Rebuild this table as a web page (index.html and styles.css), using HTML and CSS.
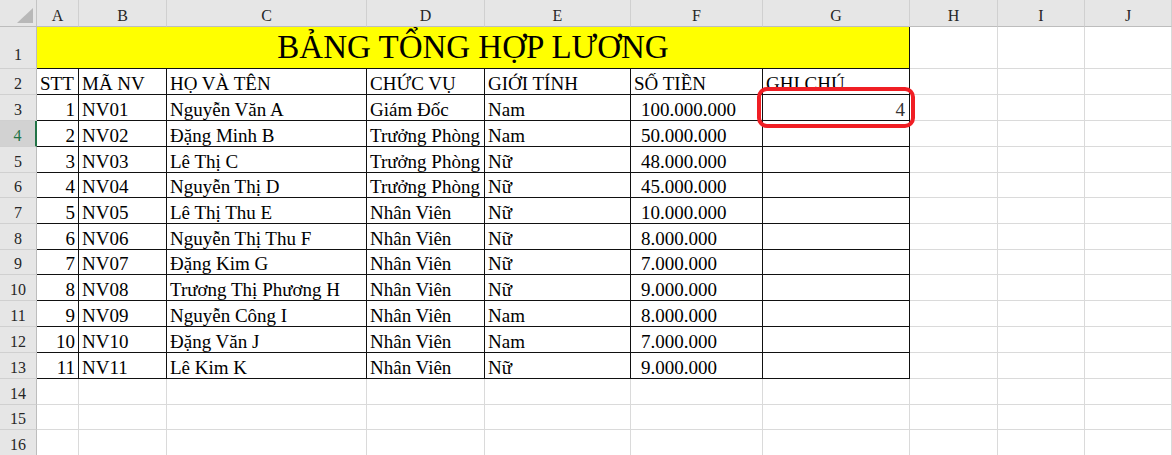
FILE: index.html
```html
<!DOCTYPE html>
<html lang="vi">
<head>
<meta charset="utf-8">
<title>Bảng tổng hợp lương</title>
<link rel="stylesheet" href="styles.css">
</head>
<body>
<div class="sheet">
  <div class="corner"><svg width="36" height="26" viewBox="0 0 36 26"><polygon points="33,8 33,23 17,23" fill="#b8b8b8"/></svg></div>
  <div class="ch">A</div><div class="ch">B</div><div class="ch">C</div><div class="ch">D</div><div class="ch">E</div><div class="ch">F</div><div class="ch">G</div><div class="ch">H</div><div class="ch">I</div><div class="ch">J</div>

  <div class="rh rh1">1</div>
  <div class="cell t title">BẢNG TỔNG HỢP LƯƠNG</div>
  <div class="cell"></div><div class="cell"></div><div class="cell"></div>

  <div class="rh">2</div>
  <div class="cell t">STT</div><div class="cell t">MÃ NV</div><div class="cell t">HỌ VÀ TÊN</div><div class="cell t">CHỨC VỤ</div><div class="cell t">GIỚI TÍNH</div><div class="cell t">SỐ TIỀN</div><div class="cell t">GHI CHÚ</div>
  <div class="cell"></div><div class="cell"></div><div class="cell"></div>

  <div class="rh">3</div>
  <div class="cell t r">1</div><div class="cell t">NV01</div><div class="cell t">Nguyễn Văn A</div><div class="cell t">Giám Đốc</div><div class="cell t">Nam</div><div class="cell t m">100.000.000</div><div class="cell t r note">4</div>
  <div class="cell"></div><div class="cell"></div><div class="cell"></div>

  <div class="rh sel">4</div>
  <div class="cell t r">2</div><div class="cell t">NV02</div><div class="cell t">Đặng Minh B</div><div class="cell t">Trưởng Phòng</div><div class="cell t">Nam</div><div class="cell t m">50.000.000</div><div class="cell t"></div>
  <div class="cell"></div><div class="cell"></div><div class="cell"></div>

  <div class="rh">5</div>
  <div class="cell t r">3</div><div class="cell t">NV03</div><div class="cell t">Lê Thị C</div><div class="cell t">Trưởng Phòng</div><div class="cell t">Nữ</div><div class="cell t m">48.000.000</div><div class="cell t"></div>
  <div class="cell"></div><div class="cell"></div><div class="cell"></div>

  <div class="rh">6</div>
  <div class="cell t r">4</div><div class="cell t">NV04</div><div class="cell t">Nguyễn Thị D</div><div class="cell t">Trưởng Phòng</div><div class="cell t">Nữ</div><div class="cell t m">45.000.000</div><div class="cell t"></div>
  <div class="cell"></div><div class="cell"></div><div class="cell"></div>

  <div class="rh">7</div>
  <div class="cell t r">5</div><div class="cell t">NV05</div><div class="cell t">Lê Thị Thu E</div><div class="cell t">Nhân Viên</div><div class="cell t">Nữ</div><div class="cell t m">10.000.000</div><div class="cell t"></div>
  <div class="cell"></div><div class="cell"></div><div class="cell"></div>

  <div class="rh">8</div>
  <div class="cell t r">6</div><div class="cell t">NV06</div><div class="cell t">Nguyễn Thị Thu F</div><div class="cell t">Nhân Viên</div><div class="cell t">Nữ</div><div class="cell t m">8.000.000</div><div class="cell t"></div>
  <div class="cell"></div><div class="cell"></div><div class="cell"></div>

  <div class="rh">9</div>
  <div class="cell t r">7</div><div class="cell t">NV07</div><div class="cell t">Đặng Kim G</div><div class="cell t">Nhân Viên</div><div class="cell t">Nữ</div><div class="cell t m">7.000.000</div><div class="cell t"></div>
  <div class="cell"></div><div class="cell"></div><div class="cell"></div>

  <div class="rh">10</div>
  <div class="cell t r">8</div><div class="cell t">NV08</div><div class="cell t">Trương Thị Phương H</div><div class="cell t">Nhân Viên</div><div class="cell t">Nữ</div><div class="cell t m">9.000.000</div><div class="cell t"></div>
  <div class="cell"></div><div class="cell"></div><div class="cell"></div>

  <div class="rh">11</div>
  <div class="cell t r">9</div><div class="cell t">NV09</div><div class="cell t">Nguyễn Công I</div><div class="cell t">Nhân Viên</div><div class="cell t">Nam</div><div class="cell t m">8.000.000</div><div class="cell t"></div>
  <div class="cell"></div><div class="cell"></div><div class="cell"></div>

  <div class="rh">12</div>
  <div class="cell t r">10</div><div class="cell t">NV10</div><div class="cell t">Đặng Văn J</div><div class="cell t">Nhân Viên</div><div class="cell t">Nam</div><div class="cell t m">7.000.000</div><div class="cell t"></div>
  <div class="cell"></div><div class="cell"></div><div class="cell"></div>

  <div class="rh">13</div>
  <div class="cell t r">11</div><div class="cell t">NV11</div><div class="cell t">Lê Kim K</div><div class="cell t">Nhân Viên</div><div class="cell t">Nữ</div><div class="cell t m">9.000.000</div><div class="cell t"></div>
  <div class="cell"></div><div class="cell"></div><div class="cell"></div>

  <div class="rh">14</div>
  <div class="cell"></div><div class="cell"></div><div class="cell"></div><div class="cell"></div><div class="cell"></div><div class="cell"></div><div class="cell"></div><div class="cell"></div><div class="cell"></div><div class="cell"></div>

  <div class="rh">15</div>
  <div class="cell"></div><div class="cell"></div><div class="cell"></div><div class="cell"></div><div class="cell"></div><div class="cell"></div><div class="cell"></div><div class="cell"></div><div class="cell"></div><div class="cell"></div>

  <div class="rh">16</div>
  <div class="cell"></div><div class="cell"></div><div class="cell"></div><div class="cell"></div><div class="cell"></div><div class="cell"></div><div class="cell"></div><div class="cell"></div><div class="cell"></div><div class="cell"></div>

  <div class="highlight"></div>
</div>
</body>
</html>
```
FILE: styles.css
```css
html, body {
  margin: 0;
  padding: 0;
}
body {
  width: 1172px;
  height: 455px;
  overflow: hidden;
  background: #ffffff;
  font-family: "Liberation Serif", "Times New Roman", serif;
  color: #000;
}
.sheet {
  position: relative;
  display: grid;
  grid-template-columns: 37px 42px 88px 200px 118px 146px 132px 147px 88px 87px 87px;
  grid-template-rows: 27px 42px 26px 26px 26px 26px 25px 26px 26px 25px 26px 26px 26px 26px 26px 25px 26px;
}
.sheet > div {
  box-sizing: border-box;
}
.corner {
  background: #e6e6e6;
  border-right: 1px solid #c4c4c4;
  border-bottom: 1px solid #bdbdbd;
}
.corner svg {
  display: block;
}
.ch {
  background: #e6e6e6;
  border-right: 1px solid #d0d0d0;
  border-bottom: 1px solid #bdbdbd;
  display: flex;
  align-items: flex-end;
  justify-content: center;
  font-size: 16px;
  line-height: 18px;
  padding-bottom: 1px;
  color: #262626;
}
.rh {
  background: #e6e6e6;
  border-right: 1px solid #bdbdbd;
  border-bottom: 1px solid #d0d0d0;
  display: flex;
  align-items: flex-end;
  justify-content: center;
  font-size: 16px;
  line-height: 18px;
  padding-bottom: 1px;
  color: #262626;
}
.rh1 {
  padding-bottom: 4px;
}
.rh.sel {
  background: #d2d2d2;
  color: #217346;
  border-right: 2px solid #217346;
}
.cell {
  border-right: 1px solid #dadada;
  border-bottom: 1px solid #dadada;
  display: flex;
  align-items: flex-end;
  overflow: hidden;
  white-space: nowrap;
  font-size: 19px;
  line-height: 20px;
  padding: 0 3px 0 3px;
}
.cell.t {
  border-right-color: #111;
  border-bottom-color: #111;
}
.cell.r {
  justify-content: flex-end;
}
.cell.m {
  padding-left: 10px;
}
.cell.note {
  color: #333;
  padding-right: 4px;
}
.title {
  grid-column: span 7;
  background: #ffff00;
  justify-content: center;
  font-size: 33px;
  line-height: normal;
  padding-bottom: 2px;
}
.highlight {
  position: absolute;
  left: 757px;
  top: 87px;
  width: 158px;
  height: 41px;
  border: 4px solid #f01e24;
  border-radius: 10px;
  pointer-events: none;
}
```
